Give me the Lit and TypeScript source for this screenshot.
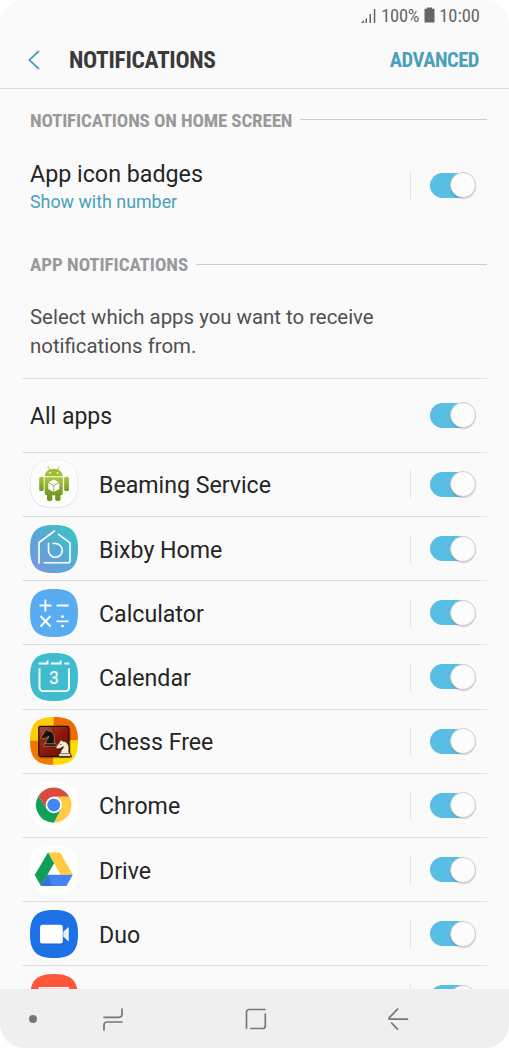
import { css, html, LitElement, svg, type SVGTemplateResult } from "lit";
import { customElement, property } from "lit/decorators.js";

interface AppEntry {
  name: string;
  icon: SVGTemplateResult;
}

const SQUIRCLE = "M24 0C41.500 0 48 6.500 48 24S41.500 48 24 48 0 41.500 0 24 6.500 0 24 0Z";

const beamingIcon = svg`
  <defs>
    <linearGradient id="droid" x1="0" y1="0" x2="0" y2="1">
      <stop offset="0" stop-color="#a9c83a" />
      <stop offset="1" stop-color="#6f9a1e" />
    </linearGradient>
  </defs>
  <path d=${SQUIRCLE} fill="#dedede" />
  <path d=${SQUIRCLE} fill="#fdfdfd" transform="translate(.5 .2) scale(.98)" />
  <path d="M18.200 6.800l2 3.500M29.200 6.800l-2 3.500" stroke="#a4c639" stroke-width="1" stroke-linecap="round" />
  <path d="M14.800 16.200c.3-4.500 4-7.400 8.900-7.400s8.600 2.900 8.900 7.400z" fill="#9dbf36" />
  <circle cx="20" cy="12.800" r=".9" fill="#fff" />
  <circle cx="27.600" cy="12.800" r=".9" fill="#fff" />
  <rect x="9.200" y="16.800" width="4.500" height="14.200" rx="1.500" fill="url(#droid)" />
  <rect x="34.200" y="16.800" width="4.700" height="14.200" rx="1.500" fill="url(#droid)" />
  <rect x="17" y="32" width="5.300" height="9" rx="1.800" fill="#6f9a1e" />
  <rect x="25.200" y="32" width="5.300" height="9" rx="1.800" fill="#6f9a1e" />
  <path d="M14.700 17.200h18.100v15.500a2.500 2.500 0 0 1-2.500 2.500H17.200a2.500 2.500 0 0 1-2.500-2.500z" fill="url(#droid)" />
  <path d="M18.300 22.500l5.500-3 5.500 3v6.500l-5.500 3-5.500-3z" fill="#fff" />
  <path d="M18.300 22.500l5.500 3 5.500-3M23.800 25.500V32" fill="none" stroke="#8aad35" stroke-width="1" />
`;

const bixbyIcon = svg`
  <defs>
    <linearGradient id="bixby" x1="0.1" y1="0.9" x2="0.85" y2="0.15">
      <stop offset="0" stop-color="#7199de" />
      <stop offset="0.5" stop-color="#59a8d6" />
      <stop offset="1" stop-color="#40bfc6" />
    </linearGradient>
  </defs>
  <path d=${SQUIRCLE} fill="url(#bixby)" />
  <g fill="none" stroke="#fff" stroke-width="1.600" stroke-linecap="round" stroke-linejoin="round">
    <path d="M9 38.300V17.500L24.500 6" />
    <path d="M28.600 9.400L40 17.800V35.800a2 2 0 0 1-2 2H14.200" />
    <path d="M18.500 18.200v7.300a6.900 6.900 0 1 0 6.900-7h-2.300" />
  </g>
`;

const calculatorIcon = svg`
  <path d=${SQUIRCLE} fill="#57acf2" />
  <g fill="none" stroke="#fff" stroke-width="1.900">
    <path d="M9.500 16.500H21.500M15.400 10.500V22.500M26.500 16.500H38.500" />
    <path d="M10.500 27L20.500 37.500M20.500 27L10.500 37.500M26.500 32.400H38.500" />
  </g>
  <circle cx="32.500" cy="27.700" r="1.400" fill="#fff" />
  <circle cx="32.500" cy="37.100" r="1.400" fill="#fff" />
`;

const calendarIcon = svg`
  <path d=${SQUIRCLE} fill="#3fbccd" />
  <g fill="none" stroke="#fff" stroke-width="1.900">
    <path d="M8.600 10.500H17.500V7.500M20.800 10.500H30.600V7.500M34.400 10.500H39.300" />
    <path d="M9.500 15.200V34.600a3.500 3.500 0 0 0 3.500 3.500H35.500a3.500 3.500 0 0 0 3.500-3.500V15.200" />
  </g>
  <text x="24" y="31.300" text-anchor="middle" font-family="Roboto, sans-serif" font-size="19" textLength="9.500" lengthAdjust="spacingAndGlyphs" fill="#fff" stroke="#fff" stroke-width=".2">3</text>
`;

// Horse head on its base, facing left
const KNIGHT = "M3 16.500v-2.300l2-1.500c0-3 2.500-3.500 2.700-6L5 8.200 1.700 9.200 0 7.500 3 3.500 5 0l1.800 1.500C11 1.500 14 5 12.700 12.500l2 1.700v2.300z";

const chessIcon = svg`
  <defs>
    <clipPath id="chess-clip"><path d=${SQUIRCLE} /></clipPath>
    <linearGradient id="board" x1="0" y1="0" x2="1" y2="1">
      <stop offset="0" stop-color="#a4502c" />
      <stop offset=".5" stop-color="#8e1708" />
      <stop offset="1" stop-color="#651208" />
    </linearGradient>
  </defs>
  <g clip-path="url(#chess-clip)">
    <path d="M0 0H23.500V23.500H0z" fill="#ffcd05" />
    <path d="M23.500 0H48V23.500H23.500z" fill="#ee6c00" />
    <path d="M0 23.500H23.500V48H0z" fill="#ef7900" />
    <path d="M23.500 23.500H48V48H23.500z" fill="#ffdb00" />
  </g>
  <rect x="9.500" y="10.300" width="31" height="31" rx="2" fill="#4d1300" opacity=".45" />
  <rect x="8.800" y="9.300" width="30" height="30" rx="1.500" fill="url(#board)" stroke="#1d0d08" stroke-width="1.200" />
  <path d="M9.600 24H23.700V10" fill="none" stroke="#6b1a0d" stroke-width=".8" />
  <path d=${KNIGHT} transform="translate(11 12.300) scale(1.030)" fill="#15110e" stroke="#dba678" stroke-width=".5" />
  <path d="M14.500 26.800h11" fill="none" stroke="#dba678" stroke-width=".7" />
  <path d=${KNIGHT} transform="translate(27 24)" fill="#201007" opacity=".8" />
  <path d=${KNIGHT} transform="translate(25.900 22.800)" fill="#f6ead5" stroke="#3b2618" stroke-width=".5" />
  <circle cx="30.800" cy="27.500" r=".6" fill="#3b2618" />
  <path d="M28.500 36.600h12.500" stroke="#3b2618" stroke-width=".6" />
`;

const chromeIcon = svg`
  <path d=${SQUIRCLE} fill="#fff" />
  <g transform="translate(23.800 24)">
    <path d="M-15.400 -9A17.800 17.800 0 0 1 15.400 -8.200H0L-7.300 4.100z" fill="#d94b3f" />
    <path d="M15.700 -8.200A17.800 17.800 0 0 1 0 17.800L7.200 4.100 0 -8.200z" fill="#fecb43" />
    <path d="M-15.400 -9A17.800 17.800 0 0 0 0 17.800L7.200 4.100H-7.200z" fill="#129f5c" />
    <circle r="8.200" fill="#fff" />
    <circle r="6.500" fill="#4386f4" />
  </g>
`;

const driveIcon = svg`
  <path d=${SQUIRCLE} fill="#fff" />
  <path d="M18 6.500H30.200L42.800 28.800H30.600z" fill="#fecb43" />
  <path d="M18 6.500L24.100 17.300 11 40 4.700 29z" fill="#109e5a" />
  <path d="M17.400 28.800H42.800L36.500 40H11z" fill="#4384f3" />
  <path d="M17.400 28.800L22.500 40H11z" fill="#3868cc" opacity=".7" />
`;

const duoIcon = svg`
  <path d=${SQUIRCLE} fill="#1b71e5" />
  <rect x="10.300" y="16" width="22.800" height="18.700" rx="2.600" fill="#1356b5" opacity=".6" />
  <path d="M33.300 22.900L38.800 18.500V32.300L33.300 27.900z" fill="#1356b5" opacity=".6" />
  <rect x="10" y="14.800" width="22.800" height="18.700" rx="2.600" fill="#fff" />
  <path d="M33.300 21.700L38 17.400q.8-.6.8.4V30.600q0 1-.8.4l-4.700-4.300z" fill="#e8f0fc" />
`;

const emailIcon = svg`
  <path d=${SQUIRCLE} fill="#ff5638" />
  <path d="M9.500 36V13.900H37.800V36" fill="none" stroke="#fff" stroke-width="1.800" />
`;

const APPS: AppEntry[] = [
  { name: "Beaming Service", icon: beamingIcon },
  { name: "Bixby Home", icon: bixbyIcon },
  { name: "Calculator", icon: calculatorIcon },
  { name: "Calendar", icon: calendarIcon },
  { name: "Chess Free", icon: chessIcon },
  { name: "Chrome", icon: chromeIcon },
  { name: "Drive", icon: driveIcon },
  { name: "Duo", icon: duoIcon },
  { name: "", icon: emailIcon },
];

@customElement("settings-switch")
export class SettingsSwitch extends LitElement {
  static styles = css`
    :host {
      display: flex;
      align-items: center;
      height: 28px;
      margin-right: 11px;
    }

    :host([divided]) {
      border-left: 1px solid #e2e2e2;
      padding-left: 19px;
    }

    .track {
      display: flex;
      justify-content: flex-end;
      align-items: center;
      width: 46px;
      height: 25px;
      border-radius: 13px;
      background: linear-gradient(to right, #58bee3 32px, transparent 32px);
    }

    .knob {
      box-sizing: border-box;
      width: 26px;
      height: 26px;
      flex: none;
      border-radius: 50%;
      background: #fcfcfc;
      border: 1px solid #cfcfcf;
      box-shadow: 0 1px 1px rgba(0, 0, 0, 0.18);
    }
  `;

  @property({ type: Boolean, reflect: true })
  divided = false;

  render() {
    return html`<div class="track"><div class="knob"></div></div>`;
  }
}

@customElement("app-root")
export class AppRoot extends LitElement {
  static styles = css`
    :host {
      display: flex;
      flex-direction: column;
      width: 509px;
      height: 1048px;
      overflow: hidden;
      border-radius: 24px;
      background: #fafafa;
      color: #252525;
      font-family: Roboto, sans-serif;
    }

    svg {
      display: block;
      flex: none;
    }

    .status {
      display: flex;
      justify-content: flex-end;
      align-items: center;
      height: 32px;
      padding-right: 29px;
      color: #666;
      font-size: 18.500px;
      font-stretch: 75%;
    }

    .status .percent {
      margin-left: 5px;
      letter-spacing: -0.3px;
    }

    .status .battery {
      margin: -2px 4px 0 5px;
    }

    .header {
      box-sizing: border-box;
      display: flex;
      align-items: center;
      height: 57px;
      padding: 0 30px 0 28px;
      border-bottom: 1px solid #dedede;
      font-weight: 700;
      font-stretch: 75%;
    }

    .title {
      margin-left: 29px;
      font-size: 23.500px;
      letter-spacing: -0.300px;
      color: #3a3a3a;
    }

    .advanced {
      margin-left: auto;
      font-size: 20.500px;
      letter-spacing: -0.450px;
      color: #4a9fbd;
    }

    .section {
      display: flex;
      align-items: center;
      height: 30px;
      gap: 8px;
      padding: 0 22px 0 30px;
      font-size: 19px;
      font-weight: 700;
      font-stretch: 75%;
      letter-spacing: -0.120px;
      color: #999;
    }

    .section::after {
      content: "";
      flex: 1;
      height: 1px;
      background: #ccc;
    }

    .home {
      margin-top: 16px;
      letter-spacing: -0.160px;
    }

    .home::after {
      margin-top: -1px;
    }

    .badges {
      display: flex;
      align-items: center;
      justify-content: space-between;
      height: 100px;
      padding: 0 22px 0 30px;
    }

    .badges .label {
      font-size: 23.250px;
      line-height: 28px;
      padding-top: 4px;
    }

    .badges .sub {
      font-size: 17.850px;
      line-height: 27px;
      color: #4a9fbd;
    }

    .apps-title {
      margin-top: 14px;
      letter-spacing: -0.060px;
    }

    .description {
      margin: 24px 0 0 30px;
      height: 75px;
      font-size: 20.400px;
      line-height: 29px;
      color: #505050;
    }

    .list {
      flex: 1;
      min-height: 0;
      overflow: hidden;
      margin: 0 22px;
      font-size: 23.150px;
    }

    .row {
      box-sizing: border-box;
      display: flex;
      align-items: center;
      height: 64.200px;
      padding-left: 8px;
      border-top: 1px solid #e0e0e0;
    }

    .row.all {
      height: 73.800px;
      font-size: 23px;
    }

    .row .name {
      flex: 1;
      padding-top: 3px;
    }

    .row svg {
      margin-right: 21px;
    }

    .nav {
      flex: none;
      display: flex;
      align-items: center;
      height: 59px;
      background: #efefef;
    }

    .nav svg {
      fill: none;
      stroke: #777;
      stroke-width: 1.700;
      stroke-linecap: round;
      stroke-linejoin: round;
    }

    .nav .dot {
      width: 8px;
      height: 8px;
      margin-left: 29px;
      border-radius: 50%;
      background: #777;
    }

    .nav .recents {
      margin-left: 65px;
    }

    .nav .homekey {
      margin-left: 120.500px;
    }

    .nav .backkey {
      margin-left: 120.500px;
    }
  `;

  private renderStatus() {
    return html`
      <div class="status">
        <svg class="signal" width="15" height="16" viewBox="0 0 15 16">
          <path d="M0 15L3 12V15zM4.500 10.500h1.500V15H4.500zM8.500 6h1.500v9H8.500zM12.800 1h1.500v14h-1.500z" fill="#666" />
        </svg>
        <span class="percent">100%</span>
        <svg class="battery" width="11" height="16" viewBox="0 0 11 16">
          <path d="M3 1.800V.5h5v1.300h2.500V15.500H.5V1.800z" fill="#666" />
        </svg>
        <span class="time">10:00</span>
      </div>
    `;
  }

  private renderApp(app: AppEntry) {
    return html`
      <div class="row">
        <svg width="48" height="48" viewBox="0 0 48 48">${app.icon}</svg>
        <span class="name">${app.name}</span>
        <settings-switch divided></settings-switch>
      </div>
    `;
  }

  render() {
    return html`
      ${this.renderStatus()}
      <div class="header">
        <svg width="12" height="20" viewBox="0 0 12 20">
          <path d="M11 1L1.200 10 11 19" fill="none" stroke="#4a9fbd" stroke-width="1.800" />
        </svg>
        <span class="title">NOTIFICATIONS</span>
        <span class="advanced">ADVANCED</span>
      </div>
      <div class="section home"><span>NOTIFICATIONS ON HOME SCREEN</span></div>
      <div class="badges">
        <div>
          <div class="label">App icon badges</div>
          <div class="sub">Show with number</div>
        </div>
        <settings-switch divided></settings-switch>
      </div>
      <div class="section apps-title"><span>APP NOTIFICATIONS</span></div>
      <div class="description">Select which apps you want to receive<br />notifications from.</div>
      <div class="list">
        <div class="row all">
          <span class="name">All apps</span>
          <settings-switch></settings-switch>
        </div>
        ${APPS.map((app) => this.renderApp(app))}
      </div>
      <div class="nav">
        <div class="dot"></div>
        <svg class="recents" width="22" height="24" viewBox="0 0 22 24">
          <path d="M2 10.300H17a3 3 0 0 0 3-3V2M20 15H5a3 3 0 0 0-3 3v5" />
        </svg>
        <svg class="homekey" width="22" height="22" viewBox="0 0 22 22">
          <path d="M1.500 20V4a2.500 2.500 0 0 1 2.500-2.500H20M20.300 6V18a2.500 2.500 0 0 1-2.500 2.500H6" />
        </svg>
        <svg class="backkey" width="22" height="22" viewBox="0 0 22 22">
          <path d="M10.500 1.200L2.600 9.300Q1 11.200 3 11.200H20.500M4.700 15.200L10.500 21.200" />
        </svg>
      </div>
    `;
  }
}

declare global {
  interface HTMLElementTagNameMap {
    "app-root": AppRoot;
    "settings-switch": SettingsSwitch;
  }
}
